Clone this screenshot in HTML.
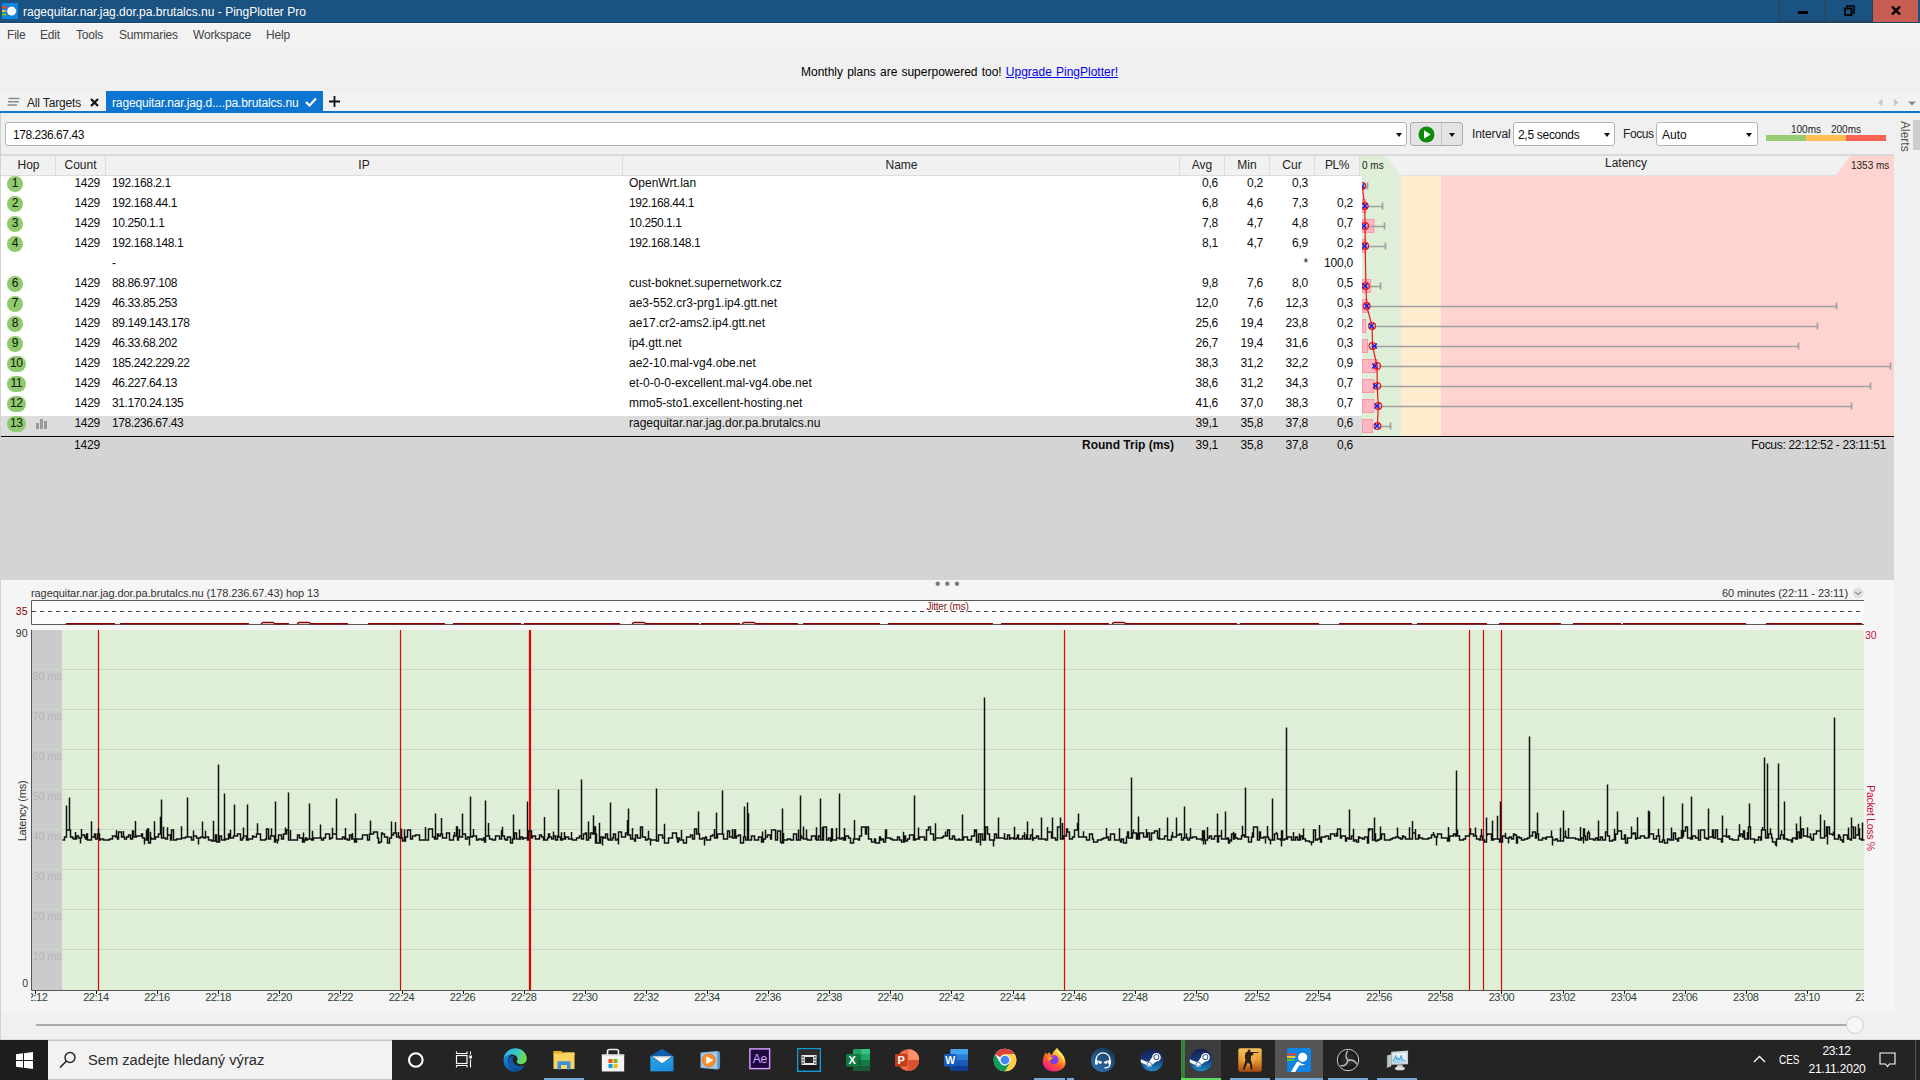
<!DOCTYPE html>
<html lang="en"><head><meta charset="utf-8"><title>PingPlotter Pro</title>
<style>
*{box-sizing:border-box;margin:0;padding:0}
html,body{width:1920px;height:1080px;overflow:hidden;background:#f0f0f0}
body{font-family:"Liberation Sans",sans-serif;font-size:12px;color:#0c0c0c;position:relative}
.a{position:absolute}
.t{position:absolute;white-space:pre;line-height:13px}
#titlebar{left:0;top:0;width:1920px;height:23px;background:#1a5282;border-bottom:1px solid #17476f}
#titlebar .t{color:#fff;left:23px;top:6px;font-size:12px}
.wb{position:absolute;top:0;height:22px;border:1px solid #2f3e4e;border-top:none}
#menubar{left:0;top:23px;width:1920px;height:23px;background:#f2f2f2;border-top:1px solid #fcfcfc}
#menubar .t{top:5px;color:#444;font-size:12px;letter-spacing:-0.2px}
#banner{left:0;top:46px;width:1920px;height:45px;background:#f0f0f0}
#tabs{left:0;top:91px;width:1920px;height:20px;background:#f2f2f2}
#blueline{left:0;top:111px;width:1920px;height:2px;background:#0f74cf}
#toolbar{left:0;top:113px;width:1894px;height:42px;background:#f0f0f0}
.inp{position:absolute;background:#fff;border:1px solid #b4b4b4;border-radius:3px}
.arr{position:absolute;width:0;height:0;border-left:3.6px solid transparent;border-right:3.6px solid transparent;border-top:4.2px solid #111;margin:0.5px 0 0 0.5px}
#thead{left:1px;top:154px;width:1893px;height:22px;background:#f1f1f1;border-top:2px solid #d9d9d9;border-bottom:1px solid #dcdcdc}
#thead .sep{position:absolute;top:0;width:1px;height:19px;background:#dcdcdc}
#thead .t{top:3px;text-align:center;color:#222}
#tbody{left:1px;top:176px;width:1361px;height:260px;background:#fff}
.row{position:absolute;left:0;width:1361px;height:20px}
.row .t{top:1px}
.hop{position:absolute;left:6px;top:0;height:16px;border-radius:8px;background:#8fca6c;text-align:center;line-height:14px;font-size:12px;color:#111;letter-spacing:-0.4px;text-indent:-0.4px}
.r{text-align:right}
#upper{left:0;top:436px;width:1894px;height:144px;background:#d4d4d4}
#panel{left:0;top:580px;width:1894px;height:431px;background:#f5f5f5}
#taskbar{left:0;top:1040px;width:1920px;height:40px;background:#242424}
</style></head>
<body>
<div id="titlebar" class="a">
<svg class="a" style="left:2px;top:3px" width="16" height="16" viewBox="0 0 16 16"><rect width="16" height="16" fill="#0f86e2"/><path d="M0 3.300H5L4.600 5.500H0Z" fill="#f4401e"/><path d="M0 7H3.700V9H0Z" fill="#f8c417"/><path d="M0 10.300H4.300L5 12.600H0Z" fill="#6cc024"/><circle cx="9.600" cy="8.100" r="4.900" fill="#fff" stroke="#0b74d6" stroke-width="0.800"/></svg>
<div class="t">ragequitar.nar.jag.dor.pa.brutalcs.nu - PingPlotter Pro</div>
<div class="wb" style="left:1779px;width:47px"><div class="a" style="left:18px;top:10.5px;width:10px;height:3px;background:#000"></div></div>
<div class="wb" style="left:1826px;width:47px;border-left:none"><svg class="a" style="left:17.5px;top:4.5px" width="11" height="11" viewBox="0 0 11 11"><path d="M3 2.5V1h7v7H8.5" fill="none" stroke="#000" stroke-width="1.6"/><rect x="1" y="3.5" width="6.5" height="6.5" fill="none" stroke="#000" stroke-width="1.8"/></svg></div>
<div class="wb" style="left:1873px;width:45px;background:#c75c51;border-color:#c75c51"><svg class="a" style="left:16.5px;top:5.5px" width="10" height="9" viewBox="0 0 10 9"><path d="M1 0.5L9 8.5M9 0.5L1 8.5" stroke="#000" stroke-width="2.4"/></svg></div>
</div>
<div id="menubar" class="a">
<div class="t" style="left:7px">File</div>
<div class="t" style="left:40px">Edit</div>
<div class="t" style="left:76px">Tools</div>
<div class="t" style="left:119px">Summaries</div>
<div class="t" style="left:193px">Workspace</div>
<div class="t" style="left:266px">Help</div>
</div>
<div id="banner" class="a"><div class="t" style="left:801px;top:20px;color:#000;word-spacing:0.8px;font-size:12px">Monthly plans are superpowered too! <span style="color:#0000ee;text-decoration:underline">Upgrade PingPlotter!</span></div></div>
<div id="tabs" class="a">
<svg class="a" style="left:7px;top:6px" width="13" height="10" viewBox="0 0 13 10"><path d="M1.5 1.5H12.5M1 4.8H12M0.5 8.1H10" stroke="#8a8a8a" stroke-width="1.5"/></svg>
<div class="t" style="left:27px;top:6px;letter-spacing:-0.15px;color:#222">All Targets</div>
<svg class="a" style="left:90px;top:7px" width="9" height="9" viewBox="0 0 9 9"><path d="M1 1L8 8M8 1L1 8" stroke="#111" stroke-width="2.2"/></svg>
<div class="a" style="left:106px;top:0;width:217px;height:20px;background:#0b75d0"><div class="t" style="left:6px;top:6px;color:#fff;letter-spacing:-0.13px">ragequitar.nar.jag.d....pa.brutalcs.nu</div><svg class="a" style="left:199px;top:6px" width="12" height="10" viewBox="0 0 12 10"><path d="M1 5L4.5 8.5L11 1.5" fill="none" stroke="#fff" stroke-width="2.2"/></svg></div>
<svg class="a" style="left:329px;top:5px" width="11" height="11" viewBox="0 0 11 11"><path d="M5.5 0V11M0 5.5H11" stroke="#111" stroke-width="1.8"/></svg>
<svg class="a" style="left:1876px;top:7px" width="44" height="10" viewBox="0 0 44 10"><path d="M6.5 0.5L2 4.5L6.5 8.5Z" fill="#c8c8c8"/><path d="M18 0.5L22.5 4.5L18 8.5Z" fill="#c8c8c8"/><path d="M32 3.5H40L36 7.5Z" fill="#8a8a8a"/></svg>
</div>
<div id="blueline" class="a"></div>
<div id="toolbar" class="a">
<div class="inp" style="left:5px;top:9px;width:1402px;height:24px"><div class="t" style="left:7px;top:6px;letter-spacing:-0.45px">178.236.67.43</div><div class="arr" style="left:1389px;top:9px"></div></div>
<div class="inp" style="left:1410px;top:9px;width:53px;height:24px;background:#e4e4e4;border-color:#adadad"><div class="a" style="left:30px;top:0;width:1px;height:22px;background:#c2c2c2"></div><svg class="a" style="left:7px;top:3px" width="17" height="17" viewBox="0 0 17 17"><circle cx="8.5" cy="8.5" r="8" fill="#0c8a0c"/><path d="M6 4.3L12.6 8.5L6 12.7Z" fill="#fff"/></svg><div class="arr" style="left:37px;top:9px"></div></div>
<div class="t" style="left:1472px;top:15px;font-size:12px;color:#222;letter-spacing:-0.1px">Interval</div>
<div class="inp" style="left:1513px;top:9px;width:102px;height:24px"><div class="t" style="left:4px;top:6px;letter-spacing:-0.3px">2,5 seconds</div><div class="arr" style="left:89px;top:9px"></div></div>
<div class="t" style="left:1623px;top:15px;color:#222;letter-spacing:-0.4px">Focus</div>
<div class="inp" style="left:1656px;top:9px;width:102px;height:24px"><div class="t" style="left:5px;top:6px">Auto</div><div class="arr" style="left:88px;top:9px"></div></div>
<div class="a" style="left:1766px;top:22px;width:40px;height:6px;background:#98cc74"></div><div class="a" style="left:1806px;top:22px;width:40px;height:6px;background:#ffbe50"></div><div class="a" style="left:1846px;top:22px;width:40px;height:6px;background:#fc6250"></div>
<div class="t" style="left:1791px;top:11px;font-size:10px;line-height:11px;color:#222">100ms</div><div class="t" style="left:1831px;top:11px;font-size:10px;line-height:11px;color:#222">200ms</div>
</div>
<div class="a" style="left:1894px;top:113px;width:26px;height:927px;background:#f0f0f0"></div>
<div class="a" style="left:1913px;top:120px;width:7px;height:30px;background:#cdcdcd"></div>
<div class="t" style="left:1897px;top:121px;color:#555;font-size:12px;transform-origin:0 0;transform:translate(14px,0) rotate(90deg)">Alerts</div>
<div id="thead" class="a">
<div class="sep" style="left:54px"></div>
<div class="sep" style="left:104px"></div>
<div class="sep" style="left:621px"></div>
<div class="sep" style="left:1178px"></div>
<div class="sep" style="left:1223px"></div>
<div class="sep" style="left:1268px"></div>
<div class="sep" style="left:1313px"></div>
<div class="sep" style="left:1358px"></div>
<div class="t" style="left:1px;width:53px">Hop</div>
<div class="t" style="left:55px;width:49px">Count</div>
<div class="t" style="left:105px;width:516px">IP</div>
<div class="t" style="left:622px;width:557px">Name</div>
<div class="t" style="left:1179px;width:44px">Avg</div>
<div class="t" style="left:1224px;width:44px">Min</div>
<div class="t" style="left:1269px;width:44px">Cur</div>
<div class="t" style="left:1314px;width:44px"><span style="letter-spacing:-0.5px">PL%</span></div>
</div>
<svg class="a" style="left:1360px;top:156px" width="534" height="20" viewBox="0 0 534 20"><rect width="534" height="20" fill="#f1f1f1"/><rect y="19" width="534" height="1" fill="#e2e2e2"/><path d="M0 0H26L41 20H0Z" fill="#dfefd7"/><path d="M490 0H534V20H476Z" fill="#ffd3cf"/><text x="2" y="13" font-size="10" fill="#222" font-family="Liberation Sans,sans-serif">0 ms</text><text x="491" y="13" font-size="10" fill="#222" font-family="Liberation Sans,sans-serif">1353 ms</text><text x="266" y="11" font-size="12" fill="#222" text-anchor="middle" font-family="Liberation Sans,sans-serif">Latency</text></svg>
<div id="tbody" class="a">
<div class="row" style="top:0px">
<div class="hop" style="width:16px">1</div>
<div class="t r" style="left:54px;width:45px;letter-spacing:-0.3px">1429</div>
<div class="t" style="left:111px;letter-spacing:-0.42px">192.168.2.1</div>
<div class="t" style="left:628px">OpenWrt.lan</div>
<div class="t r" style="left:1179px;width:38px;letter-spacing:-0.2px">0,6</div>
<div class="t r" style="left:1224px;width:38px;letter-spacing:-0.2px">0,2</div>
<div class="t r" style="left:1269px;width:38px;letter-spacing:-0.2px">0,3</div>
</div>
<div class="row" style="top:20px">
<div class="hop" style="width:16px">2</div>
<div class="t r" style="left:54px;width:45px;letter-spacing:-0.3px">1429</div>
<div class="t" style="left:111px;letter-spacing:-0.42px">192.168.44.1</div>
<div class="t" style="left:628px;letter-spacing:-0.42px">192.168.44.1</div>
<div class="t r" style="left:1179px;width:38px;letter-spacing:-0.2px">6,8</div>
<div class="t r" style="left:1224px;width:38px;letter-spacing:-0.2px">4,6</div>
<div class="t r" style="left:1269px;width:38px;letter-spacing:-0.2px">7,3</div>
<div class="t r" style="left:1314px;width:38px;letter-spacing:-0.2px">0,2</div>
</div>
<div class="row" style="top:40px">
<div class="hop" style="width:16px">3</div>
<div class="t r" style="left:54px;width:45px;letter-spacing:-0.3px">1429</div>
<div class="t" style="left:111px;letter-spacing:-0.42px">10.250.1.1</div>
<div class="t" style="left:628px;letter-spacing:-0.42px">10.250.1.1</div>
<div class="t r" style="left:1179px;width:38px;letter-spacing:-0.2px">7,8</div>
<div class="t r" style="left:1224px;width:38px;letter-spacing:-0.2px">4,7</div>
<div class="t r" style="left:1269px;width:38px;letter-spacing:-0.2px">4,8</div>
<div class="t r" style="left:1314px;width:38px;letter-spacing:-0.2px">0,7</div>
</div>
<div class="row" style="top:60px">
<div class="hop" style="width:16px">4</div>
<div class="t r" style="left:54px;width:45px;letter-spacing:-0.3px">1429</div>
<div class="t" style="left:111px;letter-spacing:-0.42px">192.168.148.1</div>
<div class="t" style="left:628px;letter-spacing:-0.42px">192.168.148.1</div>
<div class="t r" style="left:1179px;width:38px;letter-spacing:-0.2px">8,1</div>
<div class="t r" style="left:1224px;width:38px;letter-spacing:-0.2px">4,7</div>
<div class="t r" style="left:1269px;width:38px;letter-spacing:-0.2px">6,9</div>
<div class="t r" style="left:1314px;width:38px;letter-spacing:-0.2px">0,2</div>
</div>
<div class="row" style="top:80px">
<div class="t r" style="left:54px;width:45px;letter-spacing:-0.3px"></div>
<div class="t" style="left:111px;letter-spacing:-0.42px">-</div>
<div class="t" style="left:628px"></div>
<div class="t r" style="left:1269px;width:38px;letter-spacing:-0.2px">*</div>
<div class="t r" style="left:1314px;width:38px;letter-spacing:-0.2px">100,0</div>
</div>
<div class="row" style="top:100px">
<div class="hop" style="width:16px">6</div>
<div class="t r" style="left:54px;width:45px;letter-spacing:-0.3px">1429</div>
<div class="t" style="left:111px;letter-spacing:-0.42px">88.86.97.108</div>
<div class="t" style="left:628px">cust-boknet.supernetwork.cz</div>
<div class="t r" style="left:1179px;width:38px;letter-spacing:-0.2px">9,8</div>
<div class="t r" style="left:1224px;width:38px;letter-spacing:-0.2px">7,6</div>
<div class="t r" style="left:1269px;width:38px;letter-spacing:-0.2px">8,0</div>
<div class="t r" style="left:1314px;width:38px;letter-spacing:-0.2px">0,5</div>
</div>
<div class="row" style="top:120px">
<div class="hop" style="width:16px">7</div>
<div class="t r" style="left:54px;width:45px;letter-spacing:-0.3px">1429</div>
<div class="t" style="left:111px;letter-spacing:-0.42px">46.33.85.253</div>
<div class="t" style="left:628px">ae3-552.cr3-prg1.ip4.gtt.net</div>
<div class="t r" style="left:1179px;width:38px;letter-spacing:-0.2px">12,0</div>
<div class="t r" style="left:1224px;width:38px;letter-spacing:-0.2px">7,6</div>
<div class="t r" style="left:1269px;width:38px;letter-spacing:-0.2px">12,3</div>
<div class="t r" style="left:1314px;width:38px;letter-spacing:-0.2px">0,3</div>
</div>
<div class="row" style="top:140px">
<div class="hop" style="width:16px">8</div>
<div class="t r" style="left:54px;width:45px;letter-spacing:-0.3px">1429</div>
<div class="t" style="left:111px;letter-spacing:-0.42px">89.149.143.178</div>
<div class="t" style="left:628px">ae17.cr2-ams2.ip4.gtt.net</div>
<div class="t r" style="left:1179px;width:38px;letter-spacing:-0.2px">25,6</div>
<div class="t r" style="left:1224px;width:38px;letter-spacing:-0.2px">19,4</div>
<div class="t r" style="left:1269px;width:38px;letter-spacing:-0.2px">23,8</div>
<div class="t r" style="left:1314px;width:38px;letter-spacing:-0.2px">0,2</div>
</div>
<div class="row" style="top:160px">
<div class="hop" style="width:16px">9</div>
<div class="t r" style="left:54px;width:45px;letter-spacing:-0.3px">1429</div>
<div class="t" style="left:111px;letter-spacing:-0.42px">46.33.68.202</div>
<div class="t" style="left:628px">ip4.gtt.net</div>
<div class="t r" style="left:1179px;width:38px;letter-spacing:-0.2px">26,7</div>
<div class="t r" style="left:1224px;width:38px;letter-spacing:-0.2px">19,4</div>
<div class="t r" style="left:1269px;width:38px;letter-spacing:-0.2px">31,6</div>
<div class="t r" style="left:1314px;width:38px;letter-spacing:-0.2px">0,3</div>
</div>
<div class="row" style="top:180px">
<div class="hop" style="width:19px">10</div>
<div class="t r" style="left:54px;width:45px;letter-spacing:-0.3px">1429</div>
<div class="t" style="left:111px;letter-spacing:-0.42px">185.242.229.22</div>
<div class="t" style="left:628px">ae2-10.mal-vg4.obe.net</div>
<div class="t r" style="left:1179px;width:38px;letter-spacing:-0.2px">38,3</div>
<div class="t r" style="left:1224px;width:38px;letter-spacing:-0.2px">31,2</div>
<div class="t r" style="left:1269px;width:38px;letter-spacing:-0.2px">32,2</div>
<div class="t r" style="left:1314px;width:38px;letter-spacing:-0.2px">0,9</div>
</div>
<div class="row" style="top:200px">
<div class="hop" style="width:19px">11</div>
<div class="t r" style="left:54px;width:45px;letter-spacing:-0.3px">1429</div>
<div class="t" style="left:111px;letter-spacing:-0.42px">46.227.64.13</div>
<div class="t" style="left:628px">et-0-0-0-excellent.mal-vg4.obe.net</div>
<div class="t r" style="left:1179px;width:38px;letter-spacing:-0.2px">38,6</div>
<div class="t r" style="left:1224px;width:38px;letter-spacing:-0.2px">31,2</div>
<div class="t r" style="left:1269px;width:38px;letter-spacing:-0.2px">34,3</div>
<div class="t r" style="left:1314px;width:38px;letter-spacing:-0.2px">0,7</div>
</div>
<div class="row" style="top:220px">
<div class="hop" style="width:19px">12</div>
<div class="t r" style="left:54px;width:45px;letter-spacing:-0.3px">1429</div>
<div class="t" style="left:111px;letter-spacing:-0.42px">31.170.24.135</div>
<div class="t" style="left:628px">mmo5-sto1.excellent-hosting.net</div>
<div class="t r" style="left:1179px;width:38px;letter-spacing:-0.2px">41,6</div>
<div class="t r" style="left:1224px;width:38px;letter-spacing:-0.2px">37,0</div>
<div class="t r" style="left:1269px;width:38px;letter-spacing:-0.2px">38,3</div>
<div class="t r" style="left:1314px;width:38px;letter-spacing:-0.2px">0,7</div>
</div>
<div class="row" style="top:240px;background:#dcdcdc">
<div class="hop" style="width:19px">13</div>
<div class="a" style="left:35px;top:7px;width:3px;height:6px;background:#9a9a9a"></div><div class="a" style="left:39px;top:3px;width:3px;height:10px;background:#9a9a9a"></div><div class="a" style="left:43px;top:5px;width:3px;height:8px;background:#9a9a9a"></div>
<div class="t r" style="left:54px;width:45px;letter-spacing:-0.3px">1429</div>
<div class="t" style="left:111px;letter-spacing:-0.42px">178.236.67.43</div>
<div class="t" style="left:628px">ragequitar.nar.jag.dor.pa.brutalcs.nu</div>
<div class="t r" style="left:1179px;width:38px;letter-spacing:-0.2px">39,1</div>
<div class="t r" style="left:1224px;width:38px;letter-spacing:-0.2px">35,8</div>
<div class="t r" style="left:1269px;width:38px;letter-spacing:-0.2px">37,8</div>
<div class="t r" style="left:1314px;width:38px;letter-spacing:-0.2px">0,6</div>
</div>
</div>
<svg class="a" style="left:1362px;top:176px" width="532" height="260" viewBox="1362 176 532 260"><rect x="1362" y="176" width="39" height="260" fill="#dfefd7"/><rect x="1401" y="176" width="40" height="260" fill="#ffecce"/><rect x="1441" y="176" width="453" height="260" fill="#ffd3cf"/><path d="M1362 186.5H1367M1367.5 182.5V189.5" stroke="#a0a0a0" stroke-width="1.7" fill="none"/><rect x="1362.5" y="199.5" width="3.3" height="13" fill="#ffb6c1" stroke="#f59aa5" stroke-width="1"/><path d="M1364 206.5H1382M1382.5 202.5V209.5" stroke="#a0a0a0" stroke-width="1.7" fill="none"/><rect x="1362.5" y="219.5" width="11.5" height="13" fill="#ffb6c1" stroke="#f59aa5" stroke-width="1"/><path d="M1364 226.5H1384M1384.5 222.5V229.5" stroke="#a0a0a0" stroke-width="1.7" fill="none"/><rect x="1362.5" y="239.5" width="3.3" height="13" fill="#ffb6c1" stroke="#f59aa5" stroke-width="1"/><path d="M1364 246.5H1385M1385.5 242.5V249.5" stroke="#a0a0a0" stroke-width="1.7" fill="none"/><rect x="1362.5" y="279.5" width="8.2" height="13" fill="#ffb6c1" stroke="#f59aa5" stroke-width="1"/><path d="M1365 286.5H1380M1380.5 282.5V289.5" stroke="#a0a0a0" stroke-width="1.7" fill="none"/><rect x="1362.5" y="299.5" width="5.0" height="13" fill="#ffb6c1" stroke="#f59aa5" stroke-width="1"/><path d="M1365 306.5H1836M1836.5 302.5V309.5" stroke="#a0a0a0" stroke-width="1.7" fill="none"/><rect x="1362.5" y="319.5" width="3.3" height="13" fill="#ffb6c1" stroke="#f59aa5" stroke-width="1"/><path d="M1370 326.5H1817M1817.5 322.5V329.5" stroke="#a0a0a0" stroke-width="1.7" fill="none"/><rect x="1362.5" y="339.5" width="5.0" height="13" fill="#ffb6c1" stroke="#f59aa5" stroke-width="1"/><path d="M1370 346.5H1798M1798.5 342.5V349.5" stroke="#a0a0a0" stroke-width="1.7" fill="none"/><rect x="1362.5" y="359.5" width="14.8" height="13" fill="#ffb6c1" stroke="#f59aa5" stroke-width="1"/><path d="M1374 366.5H1890M1890.5 362.5V369.5" stroke="#a0a0a0" stroke-width="1.7" fill="none"/><rect x="1362.5" y="379.5" width="11.5" height="13" fill="#ffb6c1" stroke="#f59aa5" stroke-width="1"/><path d="M1374 386.5H1870M1870.5 382.5V389.5" stroke="#a0a0a0" stroke-width="1.7" fill="none"/><rect x="1362.5" y="399.5" width="11.5" height="13" fill="#ffb6c1" stroke="#f59aa5" stroke-width="1"/><path d="M1377 406.5H1851M1851.5 402.5V409.5" stroke="#a0a0a0" stroke-width="1.7" fill="none"/><rect x="1362.5" y="419.5" width="9.9" height="13" fill="#ffb6c1" stroke="#f59aa5" stroke-width="1"/><path d="M1376 426.5H1390M1390.5 422.5V429.5" stroke="#a0a0a0" stroke-width="1.7" fill="none"/><polyline fill="none" stroke="#f01414" stroke-width="1.2" points="1362.2,186 1364.7,206 1365.1,226 1365.2,246 1365.9,286 1366.7,306 1372.1,326 1372.5,346 1377.1,366 1377.2,386 1378.3,406 1377.4,426"/><circle cx="1362.2" cy="186" r="3.4" fill="none" stroke="#f01414" stroke-width="1.2"/><path d="M1359.6 183.5L1364.6 188.5M1364.6 183.5L1359.6 188.5" stroke="#1414f0" stroke-width="1.3"/><circle cx="1364.7" cy="206" r="3.4" fill="none" stroke="#f01414" stroke-width="1.2"/><path d="M1362.4 203.5L1367.4 208.5M1367.4 203.5L1362.4 208.5" stroke="#1414f0" stroke-width="1.3"/><circle cx="1365.1" cy="226" r="3.4" fill="none" stroke="#f01414" stroke-width="1.2"/><path d="M1361.4 223.5L1366.4 228.5M1366.4 223.5L1361.4 228.5" stroke="#1414f0" stroke-width="1.3"/><circle cx="1365.2" cy="246" r="3.4" fill="none" stroke="#f01414" stroke-width="1.2"/><path d="M1362.2 243.5L1367.2 248.5M1367.2 243.5L1362.2 248.5" stroke="#1414f0" stroke-width="1.3"/><circle cx="1365.9" cy="286" r="3.4" fill="none" stroke="#f01414" stroke-width="1.2"/><path d="M1362.6 283.5L1367.6 288.5M1367.6 283.5L1362.6 288.5" stroke="#1414f0" stroke-width="1.3"/><circle cx="1366.7" cy="306" r="3.4" fill="none" stroke="#f01414" stroke-width="1.2"/><path d="M1364.3 303.5L1369.3 308.5M1369.3 303.5L1364.3 308.5" stroke="#1414f0" stroke-width="1.3"/><circle cx="1372.1" cy="326" r="3.4" fill="none" stroke="#f01414" stroke-width="1.2"/><path d="M1368.9 323.5L1373.9 328.5M1373.9 323.5L1368.9 328.5" stroke="#1414f0" stroke-width="1.3"/><circle cx="1372.5" cy="346" r="3.4" fill="none" stroke="#f01414" stroke-width="1.2"/><path d="M1371.9 343.5L1376.9 348.5M1376.9 343.5L1371.9 348.5" stroke="#1414f0" stroke-width="1.3"/><circle cx="1377.1" cy="366" r="3.4" fill="none" stroke="#f01414" stroke-width="1.2"/><path d="M1372.2 363.5L1377.2 368.5M1377.2 363.5L1372.2 368.5" stroke="#1414f0" stroke-width="1.3"/><circle cx="1377.2" cy="386" r="3.4" fill="none" stroke="#f01414" stroke-width="1.2"/><path d="M1373.0 383.5L1378.0 388.5M1378.0 383.5L1373.0 388.5" stroke="#1414f0" stroke-width="1.3"/><circle cx="1378.3" cy="406" r="3.4" fill="none" stroke="#f01414" stroke-width="1.2"/><path d="M1374.6 403.5L1379.6 408.5M1379.6 403.5L1374.6 408.5" stroke="#1414f0" stroke-width="1.3"/><circle cx="1377.4" cy="426" r="3.4" fill="none" stroke="#f01414" stroke-width="1.2"/><path d="M1374.4 423.5L1379.4 428.5M1379.4 423.5L1374.4 428.5" stroke="#1414f0" stroke-width="1.3"/></svg>
<div id="upper" class="a"><div class="a" style="left:1px;top:0;width:1893px;height:1px;background:#000"></div><div class="a" style="left:1px;top:1px;width:1893px;height:1px;background:#e2e2e2"></div>
<div class="t r" style="left:55px;top:3px;width:45px;letter-spacing:-0.2px">1429</div>
<div class="t r" style="left:1000px;top:3px;width:174px;font-weight:bold">Round Trip (ms)</div>
<div class="t r" style="left:1180px;top:3px;width:38px;letter-spacing:-0.2px">39,1</div>
<div class="t r" style="left:1225px;top:3px;width:38px;letter-spacing:-0.2px">35,8</div>
<div class="t r" style="left:1270px;top:3px;width:38px;letter-spacing:-0.2px">37,8</div>
<div class="t r" style="left:1315px;top:3px;width:38px;letter-spacing:-0.2px">0,6</div>
<div class="t r" style="left:1686px;top:3px;width:200px;letter-spacing:-0.3px">Focus: 22:12:52 - 23:11:51</div>
</div>
<div id="panel" class="a">
<div class="a" style="left:0;top:0;width:1px;height:431px;background:#e6e6e6"></div>
<svg class="a" style="left:932px;top:1px" width="30" height="6" viewBox="0 0 30 6"><circle cx="5.700" cy="2.700" r="2.200" fill="#7d7d7d"/><circle cx="15.300" cy="2.700" r="2.200" fill="#7d7d7d"/><circle cx="25" cy="2.700" r="2.200" fill="#7d7d7d"/></svg>
<div class="t" style="left:31px;top:7px;font-size:11px;color:#333;letter-spacing:-0.08px">ragequitar.nar.jag.dor.pa.brutalcs.nu (178.236.67.43) hop 13</div>
<div class="t r" style="left:1600px;top:7px;width:248px;font-size:11px;color:#333;letter-spacing:-0.05px">60 minutes (22:11 - 23:11)</div>
<svg class="a" style="left:1852px;top:7px" width="12" height="12" viewBox="0 0 12 12"><circle cx="6" cy="6" r="5.5" fill="#e2e2e2"/><path d="M3 4.8L6 7.8L9 4.8" fill="none" stroke="#9a9a9a" stroke-width="1.4"/></svg>
</div>
<svg class="a" style="left:0;top:596px" width="1894" height="415" viewBox="0 596 1894 415" font-family="Liberation Sans,sans-serif"><rect x="31" y="600" width="1833" height="25" fill="#fbfbfb"/><path d="M1864 600.5H31.5V624.500H1864" fill="none" stroke="#5a5a5a" stroke-width="1"/><path d="M32 611.5H1864" stroke="#444" stroke-width="1" stroke-dasharray="4 4"/><rect x="926" y="601" width="44" height="10" fill="#fbfbfb"/><text x="947.5" y="610" font-size="10" letter-spacing="-0.2" fill="#8b1a1a" text-anchor="middle">Jitter (ms)</text><path d="M66 623.8H115M120 623.8H249M261 623.8L263 622.5H273L275 623.8H289M297 623.8L299 622.5H309L311 623.8H348M368 623.8H445M453 623.8H521M524 623.8H620M632 623.8L634 622.5H644L646 623.8H699M701 623.8H740M742 623.8L744 622.5H754L756 623.8H798M803 623.8H880M888 623.8H993M1001 623.8H1109M1112 623.8L1114 622.5H1124L1126 623.8H1237M1240 623.8H1319M1339 623.8H1412M1417 623.8H1487M1499 623.8H1561M1573 623.8H1621M1623 623.8H1746M1766 623.8H1862" stroke="#8b0000" stroke-width="1.4" fill="none"/><text x="27.5" y="614.7" font-size="10.5" fill="#8b0000" text-anchor="end">35</text><rect x="31" y="630" width="31" height="360" fill="#cbcbcb"/><rect x="62" y="630" width="1802" height="360" fill="#dfefd7"/><path d="M32 949.5H1864" stroke="#cbd9c4" stroke-width="1"/><text x="32.5" y="960" font-size="11" letter-spacing="-0.2" fill="#b6b6b6">10 ms</text><path d="M32 909.5H1864" stroke="#cbd9c4" stroke-width="1"/><text x="32.5" y="920" font-size="11" letter-spacing="-0.2" fill="#b6b6b6">20 ms</text><path d="M32 869.5H1864" stroke="#cbd9c4" stroke-width="1"/><text x="32.5" y="880" font-size="11" letter-spacing="-0.2" fill="#b6b6b6">30 ms</text><path d="M32 829.5H1864" stroke="#cbd9c4" stroke-width="1"/><text x="32.5" y="840" font-size="11" letter-spacing="-0.2" fill="#b6b6b6">40 ms</text><path d="M32 789.5H1864" stroke="#cbd9c4" stroke-width="1"/><text x="32.5" y="800" font-size="11" letter-spacing="-0.2" fill="#b6b6b6">50 ms</text><path d="M32 749.5H1864" stroke="#cbd9c4" stroke-width="1"/><text x="32.5" y="760" font-size="11" letter-spacing="-0.2" fill="#b6b6b6">60 ms</text><path d="M32 709.5H1864" stroke="#cbd9c4" stroke-width="1"/><text x="32.5" y="720" font-size="11" letter-spacing="-0.2" fill="#b6b6b6">70 ms</text><path d="M32 669.5H1864" stroke="#cbd9c4" stroke-width="1"/><text x="32.5" y="680" font-size="11" letter-spacing="-0.2" fill="#b6b6b6">80 ms</text><path d="M98.5 630V990" stroke="#e80000" stroke-width="1.2"/><path d="M400.5 630V990" stroke="#e80000" stroke-width="1.2"/><path d="M530 630V990" stroke="#e80000" stroke-width="2.2"/><path d="M1064.5 630V990" stroke="#e80000" stroke-width="1.2"/><path d="M1469.5 630V990" stroke="#e80000" stroke-width="1.2"/><path d="M1483.5 630V990" stroke="#e80000" stroke-width="1.2"/><path d="M1501.5 630V990" stroke="#e80000" stroke-width="1.2"/><path d="M62.5 840H63.5H64.5V837H65.5H66.5V830V805.5V830H67.5H68.5H69.5V797.5V830H70.5V837H71.5H72.5V838H73.5V839H74.5H75.5V832.1V839H76.5V836H77.5H78.5V838H79.5H80.5V843.5V838H81.5V835V829.1V835H82.5H83.5H84.5V837H85.5V839H86.5V834H87.5V840H88.5H89.5H90.5H91.5V837V821.3V837H92.5H93.5H94.5V834H95.5V839H96.5H97.5V834H98.5V828.4V834H99.5V840H100.5V839H101.5H102.5H103.5V840H104.5H105.5H106.5H107.5H108.5H109.5V839H110.5H111.5H112.5V836H113.5H114.5H115.5V837H116.5V830.2V837H117.5V839H118.5V832H119.5H120.5H121.5V837H122.5H123.5V831.1V837H124.5V839H125.5H126.5V837H127.5H128.5V835H129.5H130.5V839H131.5H132.5V831H133.5V837H134.5H135.5V821.0V837H136.5V836H137.5H138.5H139.5H140.5H141.5V834H142.5V838H143.5H144.5V840V844.5V840H145.5H146.5V830.0V840H147.5V829H148.5V843H149.5H150.5V838V831.8V838H151.5V839H152.5H153.5H154.5V821.2V839H155.5V837H156.5H157.5H158.5V834H159.5H160.5V816.8V834H161.5V838V799.5V838H162.5H163.5V826.8V838H164.5H165.5V839H166.5H167.5V835V827.2V835H168.5H169.5H170.5V840H171.5V830H172.5H173.5V840V830.6V840H174.5H175.5H176.5V839H177.5H178.5H179.5H180.5H181.5V838V826.3V838H182.5H183.5H184.5H185.5V837H186.5H187.5V797.5V837H188.5H189.5H190.5H191.5V840H192.5H193.5V836V830.4V836H194.5H195.5H196.5V838H197.5H198.5V844.5V838H199.5H200.5V837H201.5H202.5V821.6V837H203.5V838H204.5H205.5V837V830.7V837H206.5H207.5H208.5V840H209.5H210.5H211.5V841H212.5H213.5V820.8V841H214.5H215.5V835H216.5V842H217.5H218.5V764.5V842H219.5V836H220.5H221.5V840H222.5H223.5H224.5V793.5V840H225.5V839H226.5H227.5H228.5V834H229.5V838H230.5V829.8V838H231.5H232.5H233.5V836H234.5V804.5V836H235.5H236.5H237.5V834H238.5H239.5H240.5V840H241.5H242.5V838H243.5V836V827.5V836H244.5H245.5H246.5V840H247.5V804.5V840H248.5V839H249.5H250.5H251.5H252.5V836H253.5V837H254.5H255.5H256.5V834H257.5V823.2V834H258.5H259.5H260.5V840H261.5H262.5H263.5H264.5H265.5V839H266.5V829H267.5H268.5V839H269.5H270.5V836H271.5V828.2V836H272.5H273.5H274.5V842H275.5V840V801.5V840H276.5H277.5V843.5V840H278.5V835H279.5H280.5H281.5V839H282.5H283.5V834H284.5H285.5V827.5V834H286.5V830H287.5H288.5V840V792.5V840H289.5H290.5V830.0V840H291.5H292.5H293.5H294.5H295.5H296.5H297.5V835H298.5H299.5V838H300.5H301.5H302.5V842H303.5V832.6V842H304.5V840H305.5V838H306.5V840H307.5V839H308.5H309.5V803.5V839H310.5H311.5V840H312.5V830.8V840H313.5V838H314.5H315.5H316.5H317.5H318.5H319.5H320.5V824.4V838H321.5V840H322.5H323.5V838H324.5H325.5V834H326.5H327.5H328.5H329.5V839H330.5V838H331.5H332.5V834V827.7V834H333.5H334.5H335.5H336.5V839V798.5V839H337.5H338.5H339.5H340.5H341.5H342.5V837H343.5H344.5V839H345.5V827.9V839H346.5H347.5V840H348.5H349.5V835H350.5H351.5V839H352.5V833.0V839H353.5H354.5V842H355.5V813.5V842H356.5V839H357.5H358.5H359.5H360.5H361.5H362.5V835H363.5H364.5H365.5H366.5H367.5V840H368.5H369.5V834H370.5V820.6V834H371.5H372.5H373.5V832H374.5H375.5H376.5H377.5V838V833.0V838H378.5V843H379.5V842H380.5H381.5V833H382.5V834H383.5H384.5V837H385.5H386.5H387.5V843H388.5H389.5V838H390.5H391.5V835V821.4V835H392.5H393.5V833H394.5H395.5V821.9V833H396.5V837H397.5H398.5V832.0V837H399.5V838H400.5H401.5V828.4V838H402.5V841H403.5H404.5V829.3V841H405.5V837H406.5H407.5V830H408.5V829.7V830H409.5H410.5V839H411.5H412.5V836H413.5H414.5H415.5V835H416.5H417.5H418.5H419.5V840H420.5H421.5H422.5H423.5H424.5H425.5V827.1V840H426.5H427.5H428.5V829H429.5H430.5H431.5H432.5V837H433.5H434.5V839H435.5V813.5V839H436.5H437.5V834H438.5V836H439.5H440.5V834H441.5V817.9V834H442.5V838H443.5H444.5H445.5H446.5V833H447.5H448.5H449.5V840H450.5H451.5H452.5H453.5V836H454.5V831.9V836H455.5H456.5V827H457.5V840H458.5V837H459.5V829.0V837H460.5H461.5H462.5V834V813.5V834H463.5H464.5H465.5V839H466.5H467.5V837H468.5H469.5V845.5V837H470.5V796.5V837H471.5H472.5V836H473.5V829.0V836H474.5H475.5H476.5V840H477.5H478.5V839H479.5H480.5H481.5V840H482.5H483.5V838H484.5V842H485.5V836V800.5V836H486.5H487.5H488.5V823.1V836H489.5V839H490.5H491.5H492.5V840H493.5H494.5H495.5V836H496.5H497.5H498.5H499.5V839H500.5H501.5V831H502.5V836V826.7V836H503.5H504.5V839H505.5V840H506.5H507.5V837H508.5H509.5H510.5V843H511.5H512.5V839H513.5V814.5V839H514.5V833H515.5H516.5V839H517.5H518.5H519.5V829.5V839H520.5V837H521.5H522.5V839H523.5V838H524.5H525.5H526.5H527.5V840V801.5V840H528.5V831H529.5H530.5H531.5V838H532.5V836H533.5H534.5H535.5V839H536.5H537.5H538.5H539.5V835H540.5H541.5V837H542.5H543.5V840H544.5V817.0V840H545.5H546.5H547.5V838H548.5V834H549.5V837H550.5H551.5V839H552.5H553.5V836V831.6V836H554.5H555.5V840H556.5H557.5V836H558.5V837V789.5V837H559.5H560.5V840H561.5V832.2V840H562.5V839H563.5H564.5V832.1V839H565.5V837H566.5H567.5H568.5V839H569.5H570.5H571.5V832.0V839H572.5V840H573.5H574.5H575.5H576.5V838H577.5H578.5H579.5V836H580.5H581.5V839V779.5V839H582.5H583.5V834H584.5H585.5V833H586.5V840H587.5H588.5V838V821.5V838H589.5H590.5V833H591.5H592.5V834H593.5V815.2V834H594.5V827H595.5V843H596.5V833.3V843H597.5H598.5H599.5V822.7V843H600.5V837H601.5H602.5V845.5V837H603.5V838H604.5H605.5V834H606.5H607.5V839H608.5V840H609.5H610.5V802.5V840H611.5H612.5V838H613.5V834H614.5H615.5V840H616.5H617.5V839H618.5V832V844.5V832H619.5H620.5H621.5V837H622.5H623.5H624.5H625.5V833H626.5H627.5V835V820.0V835H628.5V808.5V835H629.5H630.5V839H631.5H632.5V828.1V839H633.5H634.5V841H635.5V835H636.5H637.5V838H638.5H639.5H640.5V827H641.5H642.5V837H643.5H644.5H645.5V840H646.5H647.5V839H648.5V830.8V839H649.5H650.5V840V845.5V840H651.5H652.5H653.5H654.5H655.5H656.5V841V788.5V841H657.5H658.5V835H659.5H660.5H661.5H662.5V838H663.5H664.5V843V823.7V843H665.5H666.5H667.5H668.5V838H669.5H670.5H671.5H672.5V833H673.5H674.5H675.5H676.5V838H677.5V842H678.5V838H679.5V840H680.5H681.5V829.9V840H682.5H683.5V843H684.5H685.5H686.5V837H687.5H688.5H689.5H690.5V835H691.5H692.5V839H693.5H694.5V829H695.5H696.5V834H697.5H698.5V811.5V834H699.5V839H700.5H701.5H702.5V838H703.5H704.5V845.5V838H705.5V837H706.5V840H707.5H708.5H709.5H710.5V836H711.5H712.5V835H713.5H714.5V838V828.9V838H715.5H716.5V812.5V838H717.5V834H718.5H719.5H720.5H721.5H722.5V790.5V834H723.5V839H724.5H725.5H726.5H727.5V831H728.5H729.5V837H730.5H731.5H732.5V838V829.1V838H733.5H734.5V830H735.5V838H736.5V836H737.5H738.5V835H739.5H740.5V843H741.5H742.5H743.5V837H744.5V806.5V837H745.5V840H746.5H747.5V802.5V840H748.5V813.3V840H749.5H750.5H751.5V836H752.5H753.5H754.5V840H755.5H756.5H757.5H758.5V837H759.5H760.5H761.5V842H762.5V831.6V842H763.5V839H764.5H765.5V837V829.7V837H766.5H767.5V835H768.5H769.5H770.5V839H771.5V830H772.5H773.5H774.5H775.5V840H776.5H777.5V831H778.5H779.5H780.5V842H781.5V843H782.5V808.5V843H783.5V840V833.1V840H784.5H785.5H786.5H787.5V839H788.5H789.5H790.5V840H791.5H792.5H793.5V834H794.5H795.5H796.5V840H797.5H798.5V829.4V840H799.5H800.5V836V795.5V836H801.5V838H802.5H803.5V839V826.6V839H804.5H805.5H806.5V829.6V839H807.5V840H808.5H809.5H810.5H811.5V836H812.5H813.5H814.5H815.5V839H816.5V840V827.3V840H817.5H818.5V836H819.5H820.5V840V798.5V840H821.5H822.5V826.9V840H823.5V827H824.5H825.5H826.5V840H827.5H828.5V838H829.5H830.5V841H831.5V829H832.5V840H833.5H834.5H835.5H836.5V838V828.0V838H837.5H838.5H839.5V839V793.5V839H840.5H841.5V838H842.5H843.5V840H844.5V828.0V840H845.5V836H846.5H847.5H848.5V838H849.5H850.5V843H851.5H852.5H853.5V839H854.5V820.1V839H855.5H856.5H857.5H858.5V840H859.5V836H860.5H861.5V827H862.5H863.5H864.5H865.5V834V828.9V834H866.5V827H867.5H868.5V839V828.1V839H869.5H870.5H871.5V842H872.5H873.5H874.5V839H875.5V843H876.5H877.5H878.5H879.5V837H880.5V840H881.5V839H882.5H883.5V842H884.5H885.5V830H886.5V838V832.6V838H887.5H888.5H889.5H890.5V839H891.5H892.5V840H893.5H894.5H895.5H896.5H897.5V837H898.5H899.5V840H900.5H901.5V842H902.5H903.5V831.7V842H904.5V836H905.5V841H906.5H907.5V839H908.5H909.5V835H910.5H911.5H912.5H913.5V840H914.5V795.5V840H915.5V839H916.5H917.5H918.5V827.4V839H919.5V837H920.5H921.5H922.5H923.5H924.5V840H925.5H926.5V830H927.5H928.5V827H929.5H930.5V834H931.5H932.5H933.5V840H934.5H935.5V838V823.2V838H936.5H937.5H938.5H939.5H940.5H941.5H942.5V837H943.5V836H944.5H945.5V831.6V836H946.5H947.5V830H948.5H949.5V839H950.5H951.5H952.5V836H953.5H954.5V839H955.5V840H956.5H957.5H958.5V839H959.5V840H960.5H961.5H962.5V814.5V840H963.5V837H964.5H965.5H966.5H967.5V840H968.5H969.5H970.5H971.5V836H972.5H973.5H974.5V830H975.5V832.2V830H976.5V842H977.5H978.5V834H979.5H980.5V845.5V834H981.5H982.5V840H983.5H984.5V697.5V840H985.5V827H986.5H987.5V834H988.5H989.5V840H990.5H991.5H992.5H993.5V846.5V840H994.5V834H995.5H996.5V838H997.5H998.5V817.5V838H999.5H1000.5H1001.5H1002.5H1003.5H1004.5V839V832.9V839H1005.5H1006.5H1007.5V835H1008.5H1009.5V839H1010.5V838H1011.5H1012.5H1013.5V839H1014.5V826.8V839H1015.5H1016.5V838H1017.5V835H1018.5V839H1019.5H1020.5H1021.5H1022.5V836H1023.5H1024.5V839V832.3V839H1025.5H1026.5V835H1027.5V839V821.5V839H1028.5H1029.5H1030.5V835H1031.5H1032.5V840V828.8V840H1033.5V838H1034.5H1035.5H1036.5V836H1037.5H1038.5V839H1039.5H1040.5H1041.5V817.5V839H1042.5H1043.5H1044.5H1045.5V840H1046.5H1047.5V832V826.9V832H1048.5H1049.5H1050.5H1051.5V838H1052.5V817.5V838H1053.5H1054.5H1055.5V840H1056.5H1057.5V827H1058.5H1059.5H1060.5V839V817.5V839H1061.5H1062.5V822.9V839H1063.5V836H1064.5H1065.5H1066.5V829H1067.5V832H1068.5H1069.5V839H1070.5H1071.5H1072.5V837H1073.5H1074.5V830H1075.5H1076.5H1077.5V822.8V830H1078.5V837V813.5V837H1079.5H1080.5H1081.5H1082.5H1083.5V831.2V837H1084.5H1085.5H1086.5V840H1087.5H1088.5H1089.5V834H1090.5H1091.5H1092.5V839V833.4V839H1093.5V842H1094.5H1095.5H1096.5H1097.5V840H1098.5H1099.5H1100.5H1101.5V839H1102.5H1103.5V838H1104.5H1105.5H1106.5V837V828.1V837H1107.5H1108.5V840H1109.5H1110.5V834H1111.5H1112.5H1113.5H1114.5V840H1115.5H1116.5H1117.5H1118.5H1119.5V828.3V840H1120.5V842H1121.5V839H1122.5H1123.5V843H1124.5H1125.5H1126.5V837H1127.5V832H1128.5V838H1129.5H1130.5H1131.5V777.5V838H1132.5V833H1133.5V829.5V833H1134.5H1135.5H1136.5V839H1137.5V833.3V839H1138.5V816.5V839H1139.5V833H1140.5H1141.5H1142.5H1143.5V837H1144.5H1145.5H1146.5V829.0V837H1147.5V833H1148.5H1149.5V840H1150.5H1151.5V833H1152.5H1153.5H1154.5V831H1155.5H1156.5H1157.5V838H1158.5V839H1159.5V828.0V839H1160.5H1161.5H1162.5H1163.5H1164.5V836H1165.5H1166.5H1167.5V840V817.5V840H1168.5H1169.5H1170.5H1171.5V836H1172.5V837V831.8V837H1173.5H1174.5H1175.5H1176.5V835V817.5V835H1177.5H1178.5H1179.5V834H1180.5H1181.5V840H1182.5H1183.5V838H1184.5V806.5V838H1185.5H1186.5V833.3V838H1187.5V840H1188.5H1189.5V838H1190.5V828.0V838H1191.5H1192.5V837H1193.5H1194.5H1195.5H1196.5V839H1197.5H1198.5H1199.5H1200.5H1201.5V840H1202.5V831H1203.5V844.5V831H1204.5V840H1205.5V844.5V840H1206.5H1207.5V838V826.9V838H1208.5H1209.5V836H1210.5H1211.5V839H1212.5H1213.5H1214.5V836H1215.5H1216.5H1217.5V842V813.5V842H1218.5V836H1219.5H1220.5H1221.5V839V830.0V839H1222.5H1223.5H1224.5H1225.5V811.5V839H1226.5H1227.5V838H1228.5V843H1229.5V840H1230.5V841H1231.5V834H1232.5H1233.5V839V831.7V839H1234.5V834H1235.5V838H1236.5H1237.5V839H1238.5H1239.5H1240.5H1241.5V836H1242.5V835V825.7V835H1243.5H1244.5V837H1245.5V787.5V837H1246.5H1247.5H1248.5V842H1249.5H1250.5H1251.5V837H1252.5V832.2V837H1253.5V827H1254.5H1255.5H1256.5H1257.5V840H1258.5H1259.5V832H1260.5V838H1261.5H1262.5H1263.5V837H1264.5H1265.5V843.5V837H1266.5H1267.5V826.0V837H1268.5V839H1269.5V840H1270.5V844.5V840H1271.5H1272.5V798.5V840H1273.5H1274.5V834H1275.5H1276.5V831.8V834H1277.5V839H1278.5H1279.5H1280.5V840H1281.5V831V846.5V831H1282.5V840H1283.5H1284.5V839H1285.5H1286.5V727.5V839H1287.5V837H1288.5H1289.5H1290.5H1291.5V840H1292.5H1293.5V832.1V840H1294.5H1295.5V837H1296.5H1297.5V840H1298.5H1299.5V833.4V840H1300.5V836H1301.5H1302.5V839H1303.5V828.5V839H1304.5H1305.5V841H1306.5H1307.5H1308.5H1309.5V842H1310.5H1311.5V845.5V842H1312.5H1313.5V830H1314.5H1315.5V840H1316.5H1317.5V839H1318.5H1319.5V838V825.0V838H1320.5V842H1321.5V837H1322.5H1323.5H1324.5H1325.5V836H1326.5H1327.5H1328.5V839H1329.5H1330.5V834H1331.5H1332.5H1333.5H1334.5V836H1335.5H1336.5V832.4V836H1337.5V829H1338.5H1339.5H1340.5V838H1341.5V836H1342.5H1343.5H1344.5H1345.5V841H1346.5V838H1347.5H1348.5V839H1349.5V809.5V839H1350.5H1351.5V836H1352.5H1353.5V841V828.8V841H1354.5V840H1355.5H1356.5V842H1357.5H1358.5V837H1359.5V838H1360.5H1361.5H1362.5V839H1363.5H1364.5V837H1365.5H1366.5H1367.5V843H1368.5V829H1369.5V831.2V829H1370.5H1371.5H1372.5V840H1373.5H1374.5V834V817.5V834H1375.5V841H1376.5H1377.5V840H1378.5H1379.5V839H1380.5V826.6V839H1381.5V834H1382.5H1383.5H1384.5V840H1385.5H1386.5H1387.5H1388.5H1389.5H1390.5V839H1391.5H1392.5V838H1393.5H1394.5H1395.5V837H1396.5H1397.5V827.6V837H1398.5V838H1399.5H1400.5V839H1401.5H1402.5V836H1403.5V837H1404.5H1405.5V839H1406.5H1407.5H1408.5H1409.5V827.2V839H1410.5H1411.5H1412.5V833V820.9V833H1413.5H1414.5H1415.5V839V829.0V839H1416.5H1417.5H1418.5V835H1419.5V838H1420.5H1421.5H1422.5V839H1423.5H1424.5H1425.5H1426.5H1427.5H1428.5V838H1429.5H1430.5H1431.5V835H1432.5H1433.5V831.9V835H1434.5V837H1435.5H1436.5V845.5V837H1437.5V834H1438.5H1439.5H1440.5H1441.5V838H1442.5H1443.5H1444.5H1445.5H1446.5H1447.5V841H1448.5V827.0V841H1449.5V836H1450.5H1451.5H1452.5H1453.5V834H1454.5H1455.5V836H1456.5V770.5V836H1457.5V829.6V836H1458.5H1459.5V840H1460.5H1461.5H1462.5H1463.5V839H1464.5H1465.5V836H1466.5H1467.5H1468.5H1469.5V834H1470.5V828.3V834H1471.5H1472.5H1473.5V836H1474.5H1475.5V827.5V836H1476.5V839H1477.5H1478.5H1479.5V840H1480.5V836H1481.5V829.0V836H1482.5V840H1483.5H1484.5V842H1485.5H1486.5V835V817.5V835H1487.5V834H1488.5H1489.5H1490.5H1491.5V840H1492.5V820.6V840H1493.5V839H1494.5H1495.5H1496.5H1497.5V815.7V839H1498.5H1499.5V842H1500.5V801.5V842H1501.5H1502.5V836H1503.5H1504.5H1505.5V838V832.7V838H1506.5H1507.5H1508.5V843.5V838H1509.5V837H1510.5H1511.5V839H1512.5H1513.5V834H1514.5V835V833.4V835H1515.5H1516.5V843H1517.5V837H1518.5H1519.5V838H1520.5H1521.5V840H1522.5H1523.5H1524.5V839H1525.5H1526.5H1527.5V838H1528.5H1529.5V836V736.5V836H1530.5H1531.5H1532.5V832H1533.5H1534.5H1535.5V838H1536.5V834H1537.5V812.5V834H1538.5V840H1539.5H1540.5H1541.5H1542.5V838H1543.5H1544.5H1545.5V839H1546.5V837H1547.5H1548.5H1549.5H1550.5H1551.5V830.4V837H1552.5V840V845.5V840H1553.5H1554.5H1555.5V839H1556.5H1557.5V841H1558.5H1559.5H1560.5V827.8V841H1561.5H1562.5H1563.5V837V810.5V837H1564.5H1565.5V830.6V837H1566.5V838H1567.5H1568.5V827.9V838H1569.5H1570.5H1571.5H1572.5H1573.5H1574.5H1575.5V839H1576.5H1577.5H1578.5V840H1579.5H1580.5V827.0V840H1581.5V838H1582.5H1583.5V829V843.5V829H1584.5V836H1585.5V840H1586.5H1587.5V833H1588.5V830.4V833H1589.5V839H1590.5H1591.5H1592.5H1593.5V840H1594.5H1595.5V838H1596.5H1597.5V840H1598.5V820.6V840H1599.5H1600.5V837H1601.5H1602.5V840H1603.5H1604.5H1605.5V832H1606.5H1607.5V836V784.5V836H1608.5H1609.5V841H1610.5H1611.5H1612.5V840H1613.5H1614.5V828.8V840H1615.5V834H1616.5H1617.5V831V811.5V831H1618.5H1619.5H1620.5H1621.5V839H1622.5H1623.5H1624.5V835H1625.5V843H1626.5H1627.5V838H1628.5H1629.5H1630.5H1631.5V834V826.5V834H1632.5H1633.5V833H1634.5H1635.5V839H1636.5V838H1637.5V817.3V838H1638.5H1639.5H1640.5V836H1641.5H1642.5H1643.5H1644.5V838H1645.5H1646.5H1647.5H1648.5V837V810.5V837H1649.5V834V811.6V834H1650.5H1651.5H1652.5H1653.5V839H1654.5H1655.5H1656.5V836H1657.5H1658.5V828.7V836H1659.5V842H1660.5H1661.5H1662.5V840H1663.5V796.5V840H1664.5V843H1665.5H1666.5H1667.5V839H1668.5H1669.5V840H1670.5H1671.5V827.4V840H1672.5H1673.5V833H1674.5H1675.5V839H1676.5H1677.5V841H1678.5V838H1679.5H1680.5H1681.5V830.1V838H1682.5V836V803.5V836H1683.5V831H1684.5H1685.5V827H1686.5H1687.5V838H1688.5H1689.5H1690.5V839H1691.5V796.5V839H1692.5V836H1693.5H1694.5H1695.5V838H1696.5H1697.5H1698.5V840V829.6V840H1699.5H1700.5V830H1701.5H1702.5H1703.5H1704.5V838H1705.5H1706.5V839H1707.5H1708.5V837V808.5V837H1709.5H1710.5H1711.5H1712.5V830H1713.5V838H1714.5H1715.5V830H1716.5H1717.5V839H1718.5H1719.5H1720.5H1721.5V842H1722.5V836V815.5V836H1723.5H1724.5H1725.5H1726.5V837V828.5V837H1727.5H1728.5V836H1729.5V839H1730.5H1731.5H1732.5V840H1733.5H1734.5H1735.5H1736.5H1737.5H1738.5V836H1739.5V824.2V836H1740.5V834H1741.5H1742.5V837H1743.5V831H1744.5V839H1745.5H1746.5H1747.5V832.0V839H1748.5V827H1749.5V803.5V827H1750.5V839H1751.5H1752.5H1753.5H1754.5V840V843.5V840H1755.5H1756.5H1757.5H1758.5V837H1759.5H1760.5V840H1761.5V830H1762.5V827.1V830H1763.5H1764.5V757.5V830H1765.5V838H1766.5H1767.5V763.5V838H1768.5V834H1769.5H1770.5V828.2V834H1771.5V838H1772.5V842H1773.5H1774.5H1775.5V845.5V842H1776.5V839V846.5V839H1777.5H1778.5V763.5V839H1779.5H1780.5V835H1781.5V830.3V835H1782.5H1783.5V839H1784.5V801.5V839H1785.5H1786.5H1787.5V840H1788.5H1789.5H1790.5H1791.5V842H1792.5V838H1793.5H1794.5H1795.5V839H1796.5V823.6V839H1797.5V832H1798.5H1799.5V838H1800.5V816.5V838H1801.5V829H1802.5H1803.5V836H1804.5H1805.5H1806.5H1807.5V837V827.2V837H1808.5H1809.5H1810.5V838V833.3V838H1811.5V840H1812.5H1813.5V834H1814.5H1815.5H1816.5V831H1817.5H1818.5H1819.5H1820.5V838V814.5V838H1821.5H1822.5H1823.5H1824.5V836V820.2V836H1825.5H1826.5V827H1827.5V844.5V827H1828.5H1829.5V834V828.8V834H1830.5H1831.5H1832.5V835H1833.5V831.5V835H1834.5V839V717.5V839H1835.5H1836.5H1837.5H1838.5V835H1839.5V837H1840.5V840H1841.5H1842.5V842H1843.5V835H1844.5H1845.5H1846.5H1847.5V839H1848.5V827.6V839H1849.5H1850.5V840H1851.5V827V817.5V827H1852.5H1853.5V838H1854.5H1855.5V835V826.6V835H1856.5H1857.5H1858.5V829V823.8V829H1859.5V839H1860.5H1861.5V840H1862.5V822.5V840H1863.5H1864.5" stroke="#101010" stroke-width="1.5" fill="none"/><path d="M31.5 630V990.5H1864" stroke="#555" stroke-width="1" fill="none"/><text x="27.5" y="637" font-size="10.5" fill="#333" text-anchor="end">90</text><text x="28" y="987" font-size="10.5" fill="#333" text-anchor="end">0</text><text x="1865" y="639" font-size="10.5" fill="#c8143c">30</text><text transform="translate(26,811) rotate(-90)" font-size="11" letter-spacing="-0.25" fill="#333" text-anchor="middle">Latency (ms)</text><text transform="translate(1867,818) rotate(90)" font-size="10.5" letter-spacing="-0.3" fill="#c8143c" text-anchor="middle">Packet Loss %</text><clipPath id="cp"><rect x="31" y="990" width="1833" height="20"/></clipPath><g clip-path="url(#cp)"><text x="34.8" y="1001" font-size="11" letter-spacing="-0.4" fill="#2b4630" text-anchor="middle">22:12</text><path d="M35.5 991V994" stroke="#111" stroke-width="1"/><text x="95.9" y="1001" font-size="11" letter-spacing="-0.4" fill="#2b4630" text-anchor="middle">22:14</text><path d="M96.5 991V994" stroke="#111" stroke-width="1"/><text x="157.0" y="1001" font-size="11" letter-spacing="-0.4" fill="#2b4630" text-anchor="middle">22:16</text><path d="M157.5 991V994" stroke="#111" stroke-width="1"/><text x="218.1" y="1001" font-size="11" letter-spacing="-0.4" fill="#2b4630" text-anchor="middle">22:18</text><path d="M218.5 991V994" stroke="#111" stroke-width="1"/><text x="279.2" y="1001" font-size="11" letter-spacing="-0.4" fill="#2b4630" text-anchor="middle">22:20</text><path d="M279.5 991V994" stroke="#111" stroke-width="1"/><text x="340.3" y="1001" font-size="11" letter-spacing="-0.4" fill="#2b4630" text-anchor="middle">22:22</text><path d="M340.5 991V994" stroke="#111" stroke-width="1"/><text x="401.4" y="1001" font-size="11" letter-spacing="-0.4" fill="#2b4630" text-anchor="middle">22:24</text><path d="M402.5 991V994" stroke="#111" stroke-width="1"/><text x="462.5" y="1001" font-size="11" letter-spacing="-0.4" fill="#2b4630" text-anchor="middle">22:26</text><path d="M463.5 991V994" stroke="#111" stroke-width="1"/><text x="523.6" y="1001" font-size="11" letter-spacing="-0.4" fill="#2b4630" text-anchor="middle">22:28</text><path d="M524.5 991V994" stroke="#111" stroke-width="1"/><text x="584.8" y="1001" font-size="11" letter-spacing="-0.4" fill="#2b4630" text-anchor="middle">22:30</text><path d="M585.5 991V994" stroke="#111" stroke-width="1"/><text x="645.9" y="1001" font-size="11" letter-spacing="-0.4" fill="#2b4630" text-anchor="middle">22:32</text><path d="M646.5 991V994" stroke="#111" stroke-width="1"/><text x="707.0" y="1001" font-size="11" letter-spacing="-0.4" fill="#2b4630" text-anchor="middle">22:34</text><path d="M707.5 991V994" stroke="#111" stroke-width="1"/><text x="768.1" y="1001" font-size="11" letter-spacing="-0.4" fill="#2b4630" text-anchor="middle">22:36</text><path d="M768.5 991V994" stroke="#111" stroke-width="1"/><text x="829.2" y="1001" font-size="11" letter-spacing="-0.4" fill="#2b4630" text-anchor="middle">22:38</text><path d="M829.5 991V994" stroke="#111" stroke-width="1"/><text x="890.3" y="1001" font-size="11" letter-spacing="-0.4" fill="#2b4630" text-anchor="middle">22:40</text><path d="M890.5 991V994" stroke="#111" stroke-width="1"/><text x="951.4" y="1001" font-size="11" letter-spacing="-0.4" fill="#2b4630" text-anchor="middle">22:42</text><path d="M951.5 991V994" stroke="#111" stroke-width="1"/><text x="1012.5" y="1001" font-size="11" letter-spacing="-0.4" fill="#2b4630" text-anchor="middle">22:44</text><path d="M1013.5 991V994" stroke="#111" stroke-width="1"/><text x="1073.6" y="1001" font-size="11" letter-spacing="-0.4" fill="#2b4630" text-anchor="middle">22:46</text><path d="M1074.5 991V994" stroke="#111" stroke-width="1"/><text x="1134.7" y="1001" font-size="11" letter-spacing="-0.4" fill="#2b4630" text-anchor="middle">22:48</text><path d="M1135.5 991V994" stroke="#111" stroke-width="1"/><text x="1195.8" y="1001" font-size="11" letter-spacing="-0.4" fill="#2b4630" text-anchor="middle">22:50</text><path d="M1196.5 991V994" stroke="#111" stroke-width="1"/><text x="1256.9" y="1001" font-size="11" letter-spacing="-0.4" fill="#2b4630" text-anchor="middle">22:52</text><path d="M1257.5 991V994" stroke="#111" stroke-width="1"/><text x="1318.0" y="1001" font-size="11" letter-spacing="-0.4" fill="#2b4630" text-anchor="middle">22:54</text><path d="M1318.5 991V994" stroke="#111" stroke-width="1"/><text x="1379.1" y="1001" font-size="11" letter-spacing="-0.4" fill="#2b4630" text-anchor="middle">22:56</text><path d="M1379.5 991V994" stroke="#111" stroke-width="1"/><text x="1440.3" y="1001" font-size="11" letter-spacing="-0.4" fill="#2b4630" text-anchor="middle">22:58</text><path d="M1440.5 991V994" stroke="#111" stroke-width="1"/><text x="1501.4" y="1001" font-size="11" letter-spacing="-0.4" fill="#2b4630" text-anchor="middle">23:00</text><path d="M1501.5 991V994" stroke="#111" stroke-width="1"/><text x="1562.5" y="1001" font-size="11" letter-spacing="-0.4" fill="#2b4630" text-anchor="middle">23:02</text><path d="M1563.5 991V994" stroke="#111" stroke-width="1"/><text x="1623.6" y="1001" font-size="11" letter-spacing="-0.4" fill="#2b4630" text-anchor="middle">23:04</text><path d="M1624.5 991V994" stroke="#111" stroke-width="1"/><text x="1684.7" y="1001" font-size="11" letter-spacing="-0.4" fill="#2b4630" text-anchor="middle">23:06</text><path d="M1685.5 991V994" stroke="#111" stroke-width="1"/><text x="1745.8" y="1001" font-size="11" letter-spacing="-0.4" fill="#2b4630" text-anchor="middle">23:08</text><path d="M1746.5 991V994" stroke="#111" stroke-width="1"/><text x="1806.9" y="1001" font-size="11" letter-spacing="-0.4" fill="#2b4630" text-anchor="middle">23:10</text><path d="M1807.5 991V994" stroke="#111" stroke-width="1"/><text x="1868.0" y="1001" font-size="11" letter-spacing="-0.4" fill="#2b4630" text-anchor="middle">23:12</text><path d="M1868.5 991V994" stroke="#111" stroke-width="1"/><text x="1929.1" y="1001" font-size="11" letter-spacing="-0.4" fill="#2b4630" text-anchor="middle">23:14</text><path d="M1929.5 991V994" stroke="#111" stroke-width="1"/></g></svg>
<div class="a" style="left:36px;top:1023.6px;width:1820px;height:2.6px;background:#ababab"></div>
<div class="a" style="left:1846px;top:1016px;width:18px;height:18px;border-radius:9px;background:#f6f6f6;border:1px solid #d0d0d0"></div>
<div class="a" style="left:0;top:1039px;width:1920px;height:1px;background:#dcdcdc"></div>
<div class="a" style="left:0;top:113px;width:1px;height:927px;background:#d2d2d2"></div>
<div id="taskbar" class="a">
<div class="a" style="left:0;top:0;width:48px;height:40px;background:#1e1e1e"></div><div class="a" style="left:48px;top:0;width:344px;height:40px;background:#f2f2f2;border-top:1px solid #c6c6c6;border-bottom:1px solid #c6c6c6"></div>
<svg class="a" style="left:16px;top:12px" width="17" height="17" viewBox="0 0 17 17"><path d="M0 2.3L7 1.3V8H0ZM8 1.2L17 0V8H8ZM0 9H7V15.7L0 14.7ZM8 9H17V17L8 15.8Z" fill="#fff"/></svg>
<svg class="a" style="left:59px;top:11px" width="18" height="18" viewBox="0 0 18 18"><circle cx="11" cy="6.5" r="5" fill="none" stroke="#222" stroke-width="1.4"/><path d="M7.5 10L1 16.5" stroke="#222" stroke-width="1.6"/></svg>
<div class="t" style="left:88px;top:11px;font-size:14.7px;line-height:18px;color:#2b2b2b">Sem zadejte hledaný výraz</div>
<div class="a" style="left:1181px;top:0;width:40px;height:40px;background:#3c3c3c"></div>
<div class="a" style="left:1181px;top:0;width:4px;height:40px;background:#3d7d3d"></div>
<div class="a" style="left:1181px;top:38px;width:40px;height:2px;background:#5fdc5f"></div>
<div class="a" style="left:1275px;top:0;width:48px;height:40px;background:#555"></div>
<div class="a" style="left:544px;top:38px;width:40px;height:2px;background:#76a8d8"></div>
<div class="a" style="left:1034px;top:38px;width:31px;height:2px;background:#76a8d8"></div>
<div class="a" style="left:1067px;top:38px;width:7px;height:2px;background:#76a8d8"></div>
<div class="a" style="left:1230px;top:38px;width:40px;height:2px;background:#76a8d8"></div>
<div class="a" style="left:1275px;top:38px;width:48px;height:2px;background:#76a8d8"></div>
<div class="a" style="left:1328px;top:38px;width:40px;height:2px;background:#76a8d8"></div>
<div class="a" style="left:1377px;top:38px;width:40px;height:2px;background:#76a8d8"></div>
<svg width="0" height="0" class="a"><defs><linearGradient id="gEdge" x1="0" y1="0" x2="1" y2="0.3"><stop offset="0" stop-color="#2fb4ea"/><stop offset="0.55" stop-color="#34c6c9"/><stop offset="1" stop-color="#6fdc55"/></linearGradient><linearGradient id="gEdge2" x1="0" y1="0" x2="0.6" y2="1"><stop offset="0" stop-color="#1b8fe4"/><stop offset="1" stop-color="#0b4f9c"/></linearGradient><linearGradient id="gSteam" x1="0" y1="0" x2="0" y2="1"><stop offset="0" stop-color="#161d4e"/><stop offset="0.5" stop-color="#143c7c"/><stop offset="1" stop-color="#1a90cc"/></linearGradient><linearGradient id="gTs" x1="0.2" y1="0.95" x2="0.8" y2="0.05"><stop offset="0" stop-color="#2b6fad"/><stop offset="1" stop-color="#1b3a5e"/></linearGradient><linearGradient id="gCs" x1="0.5" y1="0" x2="0.5" y2="1"><stop offset="0" stop-color="#f5c35e"/><stop offset="0.5" stop-color="#e8982c"/><stop offset="1" stop-color="#a84c12"/></linearGradient><linearGradient id="gMail" x1="0" y1="0" x2="1" y2="1"><stop offset="0" stop-color="#38c3f5"/><stop offset="1" stop-color="#1480d8"/></linearGradient><linearGradient id="gFf" x1="0.85" y1="0.1" x2="0.3" y2="0.95"><stop offset="0" stop-color="#fff15e"/><stop offset="0.3" stop-color="#ffb42c"/><stop offset="0.62" stop-color="#ff5a2e"/><stop offset="1" stop-color="#f01f80"/></linearGradient><radialGradient id="gObs" cx="0.5" cy="0.5" r="0.5"><stop offset="0" stop-color="#3a3a3a"/><stop offset="1" stop-color="#141414"/></radialGradient></defs></svg>
<svg class="a" style="left:404.0px;top:8.0px" width="24" height="24" viewBox="0 0 24 24"><circle cx="11.800" cy="12" r="6.800" fill="none" stroke="#fff" stroke-width="2.100"/></svg>
<svg class="a" style="left:452.0px;top:8.0px" width="24" height="24" viewBox="0 0 24 24"><rect x="4.500" y="7.500" width="10.500" height="8" fill="none" stroke="#fff" stroke-width="1.150"/><path d="M4.500 3.500V5.500H15V3.500M4.500 19.500V17.500H15V19.500" fill="none" stroke="#fff" stroke-width="1.150"/><path d="M18.500 3.500V6.500M18.500 11.500V19.500" stroke="#fff" stroke-width="1.100"/><rect x="17.300" y="7.500" width="2.600" height="3" fill="#fff"/></svg>
<svg class="a" style="left:503.0px;top:8.0px" width="24" height="24" viewBox="0 0 24 24"><path d="M0.600 10.500C1.500 4.500 6.500 0.300 12.300 0.300C19 0.300 23.800 5.300 23.800 10.600C23.800 14 21.200 16.200 18 16.200C15.500 16.200 13.800 15.200 13.800 13.800C13.800 12.900 14.600 12.400 14.600 11.200C14.600 8.800 12.200 6.600 8.800 6.600C5 6.600 1.600 9 0.600 10.500Z" fill="url(#gEdge)"/><path d="M0.500 12C0.500 9 4 6.400 8.600 6.400C5.800 7.600 4.600 10.400 5 13.400C5.600 18 9.600 21.600 14.400 21.600C16.600 21.600 18.600 21 20.400 19.800C18.400 22.300 15.400 23.800 12 23.800C5.600 23.800 0.500 18.600 0.500 12Z" fill="url(#gEdge2)"/><path d="M5 13.400C5 9.800 8 7.800 11.200 8.200C9.800 9.400 9.400 11.200 9.800 12.800C10.600 16.200 13.800 18.400 17.600 18.200C19 18.100 20.600 17.600 22 16.800C21 19 18.600 21.600 14.400 21.600C9.600 21.600 5.600 18 5 13.400Z" fill="#0f58a8"/></svg>
<svg class="a" style="left:552.0px;top:8.0px" width="24" height="24" viewBox="0 0 24 24"><path d="M1.500 3H9.500L11 4.500H22.500V7H1.500Z" fill="#e8a317"/><path d="M1.500 3H9.500V4.500H1.500Z" fill="#f0b429"/><path d="M1.500 5.500H11L12 4.500H22.500V21H1.500Z" fill="#fcd462"/><path d="M5.500 14.500C5.500 13.700 6 13.300 6.800 13.300H17.200C18 13.300 18.500 13.700 18.500 14.500V21.500H15V17H9V21.500H5.500Z" fill="#3d8fdc"/></svg>
<svg class="a" style="left:600.5px;top:8.0px" width="24" height="24" viewBox="0 0 24 24"><path d="M6.500 7V3.500C6.500 2.200 7.300 1.500 8.500 1.500h7C16.700 1.500 17.500 2.200 17.500 3.500V7" fill="none" stroke="#ececec" stroke-width="1.700"/><path d="M0.800 6.500H23.200V23.500H0.800Z" fill="#f4f4f4"/><path d="M0.800 6.500H23.200V8H0.800Z" fill="#e2e2e2"/><rect x="7.500" y="11" width="4" height="4" fill="#f25022"/><rect x="12.500" y="11" width="4" height="4" fill="#7fba00"/><rect x="7.500" y="16" width="4" height="4" fill="#00a4ef"/><rect x="12.500" y="16" width="4" height="4" fill="#ffb900"/></svg>
<svg class="a" style="left:650.0px;top:8.0px" width="24" height="24" viewBox="0 0 24 24"><path d="M0.500 8L12 0.800L23.500 8V9H0.500Z" fill="#0f5fb0"/><path d="M2.500 8.500H21.500L12 15.500Z" fill="#fff"/><path d="M2.500 8.500H21.500L20 10H4Z" fill="#dcdcdc"/><path d="M0.500 8L12 15.500L23.500 8V23.200H0.500Z" fill="url(#gMail)"/><path d="M0.500 8L23.500 23.200H0.500Z" fill="#1e8fe0" opacity="0.550"/></svg>
<svg class="a" style="left:698.2px;top:7.8px" width="23.5" height="23.5" viewBox="0 0 24 24"><path d="M2.500 4.500L20 3L22.500 4.500V20.500L20 22L2.500 20.500Z" fill="#7fb2dd"/><path d="M20 3L22.500 4.500V20.500L20 22Z" fill="#5b94c7"/><path d="M3.500 5.500L19.500 4V21L3.500 19.500Z" fill="#a6c9ea"/><circle cx="11" cy="12.500" r="7" fill="#f07a1a"/><circle cx="11" cy="12.500" r="5.800" fill="#f7942e"/><path d="M8.500 8.500L15.500 12.500L8.500 16.500Z" fill="#fff"/></svg>
<svg class="a" style="left:749.0px;top:8.4px" width="21.5" height="21.5" viewBox="0 0 24 24"><rect x="1" y="1" width="22" height="22" fill="#1f0740" stroke="#d6a1ff" stroke-width="1.600"/><text x="12" y="17" font-size="13.500" font-family="Liberation Sans,sans-serif" fill="#d9a8ff" text-anchor="middle" letter-spacing="-0.500">Ae</text></svg>
<svg class="a" style="left:797.0px;top:8.0px" width="24" height="24" viewBox="0 0 24 24"><rect x="0.700" y="0.700" width="22.600" height="22.600" fill="#1a1a1a" stroke="#159ad6" stroke-width="1.400"/><path d="M1.500 1.500H22.500V10L1.500 14Z" fill="#2e2e2e"/><rect x="4.500" y="7" width="15" height="10" fill="#e6e6e6"/><rect x="7.800" y="9" width="8.400" height="6" fill="#242424"/><path d="M5.300 8.300h1.500v1.400h-1.500zM5.300 11.300h1.500v1.400h-1.500zM5.300 14.300h1.500v1.400h-1.500zM17.200 8.300h1.500v1.400h-1.500zM17.200 11.300h1.500v1.400h-1.500zM17.200 14.300h1.500v1.400h-1.500z" fill="#3a3a3a"/></svg>
<svg class="a" style="left:846.0px;top:7.5px" width="24" height="24" viewBox="0 0 24 24"><rect x="7" y="1" width="17" height="22" rx="1.500" fill="#21a366"/><rect x="15.500" y="1" width="8.500" height="5.500" fill="#33c481"/><rect x="7" y="6.500" width="8.500" height="5.500" fill="#107c41"/><rect x="15.500" y="6.500" width="8.500" height="5.500" fill="#21a366"/><rect x="7" y="12" width="8.500" height="5.500" fill="#185c37"/><rect x="15.500" y="12" width="8.500" height="5.500" fill="#107c41"/><rect x="7" y="17.500" width="17" height="5.500" fill="#185c37"/><rect x="0" y="6" width="12.500" height="12.500" rx="1.200" fill="#107c41"/><text x="6.200" y="16.300" font-size="11" font-weight="bold" font-family="Liberation Sans,sans-serif" fill="#fff" text-anchor="middle">X</text></svg>
<svg class="a" style="left:895.0px;top:7.5px" width="24" height="24" viewBox="0 0 24 24"><circle cx="13.400" cy="12" r="10.800" fill="#ed6c47"/><path d="M13.400 1.200A10.800 10.800 0 0 1 24.200 12H13.400Z" fill="#ff8f6b"/><path d="M13.400 22.800A10.800 10.800 0 0 0 24.200 12H13.400Z" fill="#d35230"/><rect x="0" y="6" width="12.500" height="12.500" rx="1.200" fill="#c43e1c"/><text x="6.200" y="16.300" font-size="11" font-weight="bold" font-family="Liberation Sans,sans-serif" fill="#fff" text-anchor="middle">P</text></svg>
<svg class="a" style="left:944.0px;top:7.5px" width="24" height="24" viewBox="0 0 24 24"><rect x="6.500" y="1" width="17.500" height="22" rx="1.500" fill="#2b7cd3"/><rect x="6.500" y="1" width="17.500" height="5.500" fill="#41a5ee"/><rect x="6.500" y="12" width="17.500" height="5.500" fill="#185abd"/><rect x="6.500" y="17.500" width="17.500" height="5.500" fill="#103f91"/><rect x="0" y="6" width="12.500" height="12.500" rx="1.200" fill="#185abd"/><text x="6.200" y="16.300" font-size="10.500" font-weight="bold" font-family="Liberation Sans,sans-serif" fill="#fff" text-anchor="middle">W</text></svg>
<svg class="a" style="left:993.0px;top:8.0px" width="24" height="24" viewBox="0 0 24 24"><circle cx="12" cy="12" r="11.300" fill="#fff"/><path d="M12 0.700A11.300 11.300 0 0 1 21.800 6.350H12A5.650 5.650 0 0 0 7.100 9.200L2.200 6.350A11.300 11.300 0 0 1 12 0.700Z" fill="#db4437"/><path d="M21.800 6.350A11.300 11.300 0 0 1 12 23.300L16.900 14.800A5.650 5.650 0 0 0 16.900 9.200L12 6.350Z" fill="#ffcd40"/><path d="M2.200 6.350L7.100 14.800A5.650 5.650 0 0 0 12 17.650L16.900 14.800L12 23.300A11.300 11.300 0 0 1 2.200 6.350Z" fill="#0f9d58"/><circle cx="12" cy="12" r="5.300" fill="#f1f1f1"/><circle cx="12" cy="12" r="4.300" fill="#4285f4"/></svg>
<svg class="a" style="left:1042.0px;top:8.0px" width="24" height="24" viewBox="0 0 24 24"><path d="M15 0C16 2 18.500 3.500 20.300 6.500c2 2 3.200 5 3.200 8.300 0 5-4.800 8.700-11.300 8.700S0.800 19.500 0.800 13.700C0.800 10 2.200 7 3.600 4.200c.300 1 .800 1.800 1.500 2.300C5.500 5.500 6.300 4.600 7.300 4.200c.500 1.300 1.200 2.300 2.500 3C10.500 4.500 13 2 15 0Z" fill="url(#gFf)"/><path d="M15 0C16 2 18.500 3.500 20.300 6.500c1.800 2.200 2.600 5.500 1.500 8.500C21.500 10.500 19 8 16.500 6.500c-1.300-1.700-1.800-4-1.500-6.500Z" fill="#fff36a" opacity="0.800"/><circle cx="12" cy="11.800" r="4.500" fill="#7b3fe6"/><path d="M9.500 8.300c1.200-.900 3.300-1 4.800-.300-.700.300-1 .900-1 1.600-1.500-.700-2.900-.400-3.800-1.300Z" fill="#b833e1"/><path d="M4.800 9.300C6.300 8.300 8.600 8.300 10.300 9.200c.800.400.700 1.300 0 1.500-1.200.300-2 1.300-2.600 2.500C6.500 12.500 5.300 11 4.800 9.300Z" fill="#ff9a1f"/></svg>
<svg class="a" style="left:1091.0px;top:8.0px" width="24" height="24" viewBox="0 0 24 24"><circle cx="12" cy="12" r="12" fill="url(#gTs)"/><path d="M5 13.500V11.800a7 7 0 0 1 14 0V13.500" fill="none" stroke="#fff" stroke-width="1.300"/><rect x="4" y="11.800" width="2.800" height="5" rx="1.200" fill="#fff"/><rect x="17.200" y="11.800" width="2.800" height="5" rx="1.200" fill="#fff"/><path d="M18.800 16.500c0 2.600-2.300 3.300-5.300 3.300" fill="none" stroke="#fff" stroke-width="1.200"/><path d="M7.300 12.300l4 1.700c-.3 1.200-1.300 1.800-2.300 1.800-1.200 0-2-1-1.700-3.500Z" fill="#fff"/><path d="M16.700 12.300l-4 1.700c.3 1.200 1.300 1.800 2.300 1.800 1.200 0 2-1 1.700-3.500Z" fill="#fff"/></svg>
<svg class="a" style="left:1140.0px;top:7.7px" width="24" height="24" viewBox="0 0 24 24"><circle cx="12" cy="12" r="11.300" fill="url(#gSteam)"/><path d="M0.800 11.300L7.300 14a3 3 0 0 1 1.900-.6l3-4.300a4.300 4.300 0 1 1 4.300 4.400l-4.200 3a3 3 0 0 1-5.900.4L0.900 14.600Z" fill="#fff"/><circle cx="16.400" cy="9.100" r="2.900" fill="#1a3a78"/><circle cx="16.400" cy="9.100" r="2.100" fill="#fff"/><circle cx="9.300" cy="16.300" r="2.100" fill="none" stroke="#1d4a8c" stroke-width="0.700"/></svg>
<svg class="a" style="left:1188.8px;top:7.7px" width="24" height="24" viewBox="0 0 24 24"><circle cx="12" cy="12" r="11.300" fill="url(#gSteam)"/><path d="M0.800 11.300L7.300 14a3 3 0 0 1 1.900-.6l3-4.300a4.300 4.300 0 1 1 4.300 4.400l-4.200 3a3 3 0 0 1-5.900.4L0.900 14.600Z" fill="#fff"/><circle cx="16.400" cy="9.100" r="2.900" fill="#1a3a78"/><circle cx="16.400" cy="9.100" r="2.100" fill="#fff"/><circle cx="9.300" cy="16.300" r="2.100" fill="none" stroke="#1d4a8c" stroke-width="0.700"/></svg>
<svg class="a" style="left:1238.0px;top:7.8px" width="24" height="24" viewBox="0 0 24 24"><rect x="0.300" y="0.300" width="23.400" height="23.400" rx="1.800" fill="url(#gCs)"/><ellipse cx="11" cy="10" rx="7" ry="8" fill="#f6c468" opacity="0.350"/><path d="M11 1.500c.900 0 1.500.600 1.500 1.500l-.200 1L20.600 4v.700L15.600 4.900l-.600 2.400-2 .400-.200 4 1.300 4.500.200 4.800.600.500h-2.400l-.400-4.700-2.300-2.200-2 4-1.200 3h-2l.400-1 1.200-3.600 1.200-5-.500-3 .300-3.500c.300-1.200 1.500-1.700 2.500-1.800-.300-1.200.300-2.200 1.300-2.200Z" fill="#2c2216"/></svg>
<svg class="a" style="left:1287.0px;top:8.0px" width="24" height="24" viewBox="0 0 24 24"><path d="M1.300 0H22.700L24 1.300V22.700L22.700 24H1.300L0 22.700V1.300Z" fill="#1183e0"/><path d="M0 5.500H9.300L8.800 7.300H0Z" fill="#f4401e"/><path d="M0 7.900H8.600L7.900 10.100H0Z" fill="#f8c41c"/><path d="M0 10.900H7.600L6.800 13.100H0Z" fill="#5cbf2a"/><circle cx="15.650" cy="9.400" r="4.550" fill="#fff"/><path d="M9.900 13.800C11.500 13.400 12.500 14.200 13.500 15C15 16 16.800 16.300 18.400 16.100C17 17.600 14.500 18 12.600 17L8.200 24H3.900Z" fill="#fff"/></svg>
<svg class="a" style="left:1336.0px;top:7.7px" width="24" height="24" viewBox="0 0 24 24"><circle cx="12" cy="12" r="10.700" fill="url(#gObs)" stroke="#cdcdcd" stroke-width="1"/><path d="M12.300 12.300C9.300 10.200 9.300 5.800 11.800 3M12 12.600c3.300-1.700 7.600.200 8.700 3.800M11.700 11.900c.300 3.900-3.300 6.800-7.200 5.600" fill="none" stroke="#bcbcbc" stroke-width="1.400"/></svg>
<svg class="a" style="left:1385.5px;top:8.8px" width="23" height="23" viewBox="0 0 24 24"><path d="M1 7L5.500 5.500V18L1 19.500Z" fill="#c4c9cd"/><path d="M1 7L2.500 6.500V19L1 19.500Z" fill="#a9afb4"/><rect x="1.200" y="9.300" width="1.300" height="1.300" fill="#5fd04a"/><path d="M5.500 2.800L23 1.500V16L5.500 16.500Z" fill="#cfd2d4"/><path d="M7 4.500L21.500 3.500V14.300L7 14.800Z" fill="#e4f2fb"/><path d="M7 12l1.800-1.500 1.200-3.800 1.300 4.300 1.400-2 1.500 2.500 1.600-4.800 1.400 4.300 1.800.800 1.500.600V14.300L7 14.800Z" fill="#a6d4f2"/><path d="M7 12l1.800-1.500 1.200-3.800 1.300 4.300 1.400-2 1.500 2.500 1.600-4.800 1.400 4.300 1.800.800 1.500.600" fill="none" stroke="#3a8fd0" stroke-width="0.900"/><path d="M12 16.300h5l.800 3h-6.600Z" fill="#b9bdc0"/><ellipse cx="14.500" cy="20.300" rx="5.200" ry="2" fill="#d9dbdd"/></svg>
<svg class="a" style="left:1753px;top:15px" width="13" height="8" viewBox="0 0 13 8"><path d="M1 7L6.500 1.500L12 7" fill="none" stroke="#fff" stroke-width="1.300"/></svg>
<div class="t" style="left:1779px;top:14px;color:#fff;font-size:12px;transform-origin:0 0;transform:scaleX(0.83)">CES</div>
<div class="t" style="left:1796.5px;top:5px;width:80px;text-align:center;color:#fff;font-size:12px;letter-spacing:-0.45px">23:12</div>
<div class="t" style="left:1797px;top:23px;width:80px;text-align:center;color:#fff;font-size:12px;letter-spacing:-0.2px">21.11.2020</div>
<svg class="a" style="left:1879px;top:12px" width="17" height="17" viewBox="0 0 17 17"><path d="M1 1H16V12H10.500L8.500 14.500L6.500 12H1Z" fill="none" stroke="#fff" stroke-width="1.100"/></svg>
<div class="a" style="left:1915px;top:0;width:1px;height:40px;background:#5a5a5a"></div>
</div>
</body></html>
